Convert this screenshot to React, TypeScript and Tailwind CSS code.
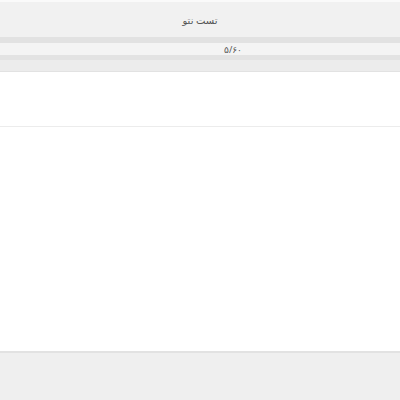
export default function App() {
  return (
    <div className="w-[400px] h-[400px] flex flex-col bg-white" style={{ fontFamily: '"Noto Sans", "DejaVu Sans", sans-serif' }}>
      <div className="h-[2px] bg-[#fafafa]" />
      <div className="h-[35px] bg-[#f1f1f1] flex items-center justify-center">
        <span dir="rtl" className="text-[10px] text-[#555] leading-none">تست نتو</span>
      </div>
      <div className="h-[6px] bg-[#e2e2e2]" />
      <div className="h-[12px] bg-[#f4f4f4] flex items-center justify-center">
        <span className="text-[9px] text-[#555] leading-none pl-[66px]">۵/۶۰</span>
      </div>
      <div className="h-[5px] bg-[#e3e3e3]" />
      <div className="h-[12px] bg-[#ececec] border-b border-[#e2e2e2]" />
      <div className="h-[55px] bg-white border-b border-[#ececec]" />
      <div className="flex-1 bg-white" />
      <div className="h-[49px] bg-[#efefef] border-t-2 border-[#e2e2e2]" />
    </div>
  );
}
